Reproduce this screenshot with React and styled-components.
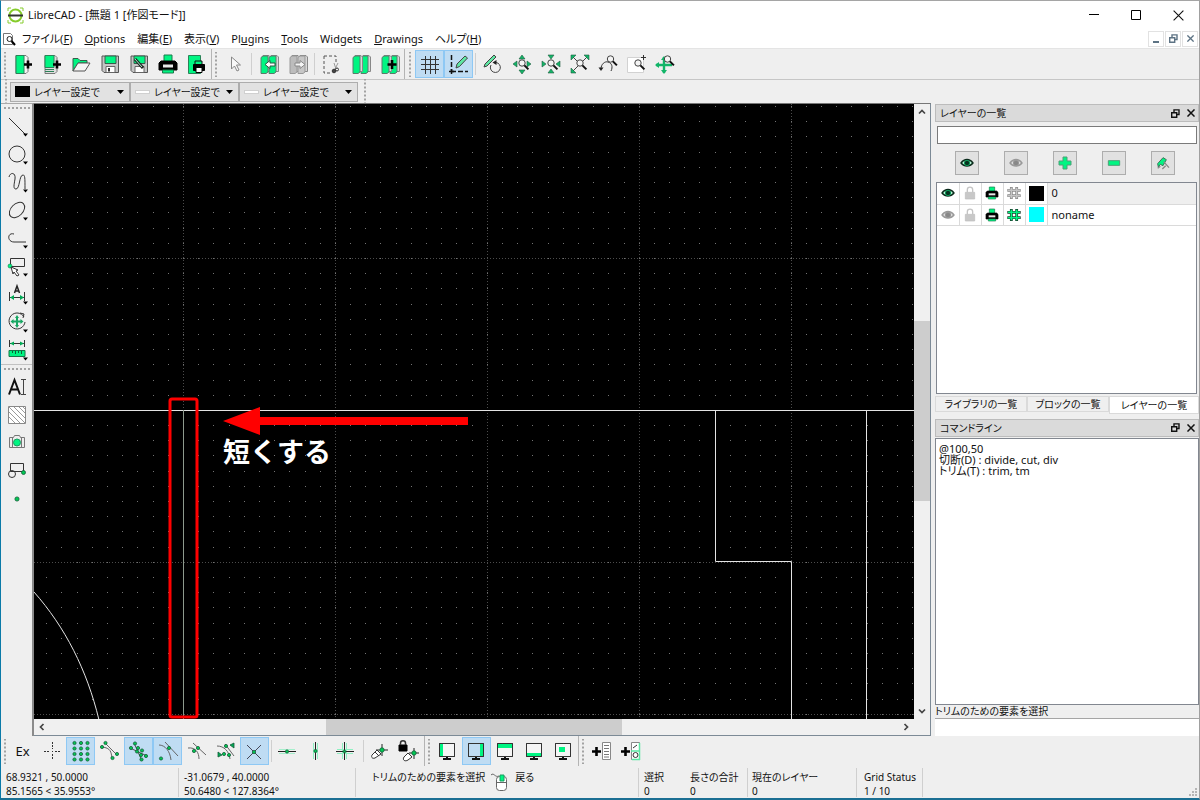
import { useState } from "react";
import styled, { createGlobalStyle, css } from "styled-components";

const GREEN = "#00f582";

const GlobalStyle = createGlobalStyle`
  * {
    box-sizing: border-box;
  }

  body {
    margin: 0;
    background: #efefef;
    color: #111;
    font-family: "Noto Sans", "Noto Sans CJK JP", sans-serif;
    font-size: 11px;
    line-height: 14px;
    font-feature-settings: "palt";
  }

  button, input, select, textarea {
    font: inherit;
    color: inherit;
    font-feature-settings: inherit;
  }
`;

const Window = styled.div`
  display: flex;
  flex-direction: column;
  min-height: 100vh;
  background: #efefef;
  border-top: 1px solid #a5a5a5;
  border-left: 1px solid #0b7aa8;
  border-right: 1px solid #a0a0a0;
  border-bottom: 2px solid #1b6f93;
`;

const TitleBar = styled.header`
  display: flex;
  align-items: center;
  height: 28px;
  padding-left: 6px;
  background: #fff;
`;

const Title = styled.h1`
  flex: 1;
  margin: 0 0 0 4px;
  font-size: 11px;
  font-weight: 400;
`;

const CaptionButton = styled.button`
  display: flex;
  align-items: center;
  justify-content: center;
  width: 42px;
  height: 28px;
  padding: 0;
  border: none;
  background: none;
`;

const MenuBar = styled.nav`
  display: flex;
  align-items: center;
  height: 20px;
  padding: 0 1px;
  background: #fff;
  border-bottom: 1px solid #e4e4e4;
`;

const MenuItem = styled.button`
  padding: 0 6px;
  border: none;
  background: none;
  white-space: nowrap;
`;

const MenuSpace = styled.div`
  flex: 1;
`;

const MdiButton = styled.button`
  display: flex;
  align-items: center;
  justify-content: center;
  width: 16px;
  height: 16px;
  margin-left: 1px;
  padding: 0;
  border: 1px solid #e2e2e2;
  background: #fff;
  color: #5d7384;
`;

const ToolRow = styled.div`
  display: flex;
  align-items: center;
  height: ${(props) => props.$height}px;
  border-bottom: ${(props) => (props.$line ? "1px solid #c6c6c6" : "none")};
`;

const Handle = styled.span`
  flex: none;
  width: ${(props) => props.$width || 8}px;
  height: 25px;
  background: radial-gradient(circle, #a2a2a2 1px, transparent 1px) center / 4px 4px repeat-y;
`;

const SideHandle = styled.span`
  flex: none;
  width: 26px;
  height: 8px;
  background: radial-gradient(circle, #a2a2a2 1px, transparent 1px) center / 4px 4px repeat-x;
`;

const Sep = styled.span`
  flex: none;
  width: 1px;
  height: 22px;
  margin: 0 2px;
  background: #cfcfcf;
`;

const GroupEnd = styled.span`
  flex: none;
  width: 1px;
  align-self: stretch;
  background: #b4b4b4;
`;

const ToolButton = styled.button`
  display: flex;
  flex: none;
  align-items: center;
  justify-content: center;
  width: 29px;
  height: 28px;
  padding: 0;
  border: 1px solid transparent;
  background: none;
  font-size: 13px;
  ${(props) =>
    props.$on &&
    css`
      border-color: #8ec8f4;
      background: #bfdcf3;
    `}
`;

const Combo = styled.label`
  display: flex;
  align-items: center;
  gap: 4px;
  width: ${(props) => props.$width}px;
  height: 20px;
  padding: 0 5px 0 4px;
  border: 1px solid #adadad;
  background: #e2e2e2;
  font-size: 10px;
`;

const PenSwatch = styled.span`
  width: 15px;
  height: ${(props) => (props.$line ? 4 : 11)}px;
  background: ${(props) => (props.$line ? "#fff" : "#000")};
  border: ${(props) => (props.$line ? "1px solid #d0d0d0" : "none")};
`;

const Select = styled.select`
  flex: 1;
  min-width: 0;
  padding: 0;
  border: none;
  appearance: none;
  background: none;
`;

const Main = styled.main`
  display: flex;
  flex: 1;
`;

const SideBar = styled.div`
  display: flex;
  flex-direction: column;
  align-items: center;
  width: 33px;
  border-top: 1px solid #aaa;
  border-right: 2px solid #8b8b8b;
`;

const SideLine = styled.span`
  width: 100%;
  height: 1px;
  background: #c2c2c2;
`;

const Center = styled.section`
  display: flex;
  flex: 1;
  flex-direction: column;
  min-width: 0;
  border-top: 1px solid #777;
  border-bottom: 1px solid #7c8a96;
  border-right: 1px solid #7c8a96;
`;

const ViewRow = styled.div`
  display: flex;
  flex: 1;
`;

const ViewSlot = styled.div`
  display: flex;
  flex: 1;
  min-width: 0;
  overflow: hidden;
  background: #000;
`;

const Drawing = styled.svg`
  flex: 1 1 0;
  min-width: 0;
  height: auto;
`;

const Note = styled.text`
  fill: #fff;
  font-size: 27px;
  font-weight: 700;
  font-feature-settings: normal;
`;

const VScroll = styled.div`
  display: flex;
  flex-direction: column;
  align-items: center;
  width: 16px;
  background: #f0f0f0;
`;

const HScroll = styled.div`
  display: flex;
  align-items: center;
  height: 16px;
  padding-right: 16px;
  background: #f0f0f0;
`;

const ScrollButton = styled.button`
  display: flex;
  align-items: center;
  justify-content: center;
  width: 16px;
  height: 16px;
  padding: 0;
  border: none;
  background: none;
`;

const Gap = styled.span`
  flex: ${(props) => props.$grow};
`;

const Thumb = styled.span`
  flex: ${(props) => props.$grow};
  align-self: stretch;
  background: #cdcdcd;
`;

const Dock = styled.aside`
  display: flex;
  flex-direction: column;
  width: 268px;
  padding: 1px 0 0 4px;
  font-size: 10px;
`;

const DockTitle = styled.header`
  display: flex;
  flex: none;
  align-items: center;
  height: 18px;
  padding: 0 0 0 4px;
  background: #dadada;
  border: 1px solid #bcbcbc;
`;

const DockName = styled.h2`
  flex: 1;
  margin: 0;
  font-size: 10px;
  font-weight: 400;
`;

const DockButton = styled.button`
  display: flex;
  align-items: center;
  justify-content: center;
  width: 15px;
  height: 14px;
  padding: 0;
  border: none;
  background: none;
`;

const Filter = styled.input`
  flex: none;
  height: 18px;
  margin: 4px 2px 7px;
  border: 1px solid #7a7a7a;
  background: #fff;
`;

const LayerActions = styled.div`
  display: flex;
  justify-content: space-around;
  padding: 0 11px 0 7px;
`;

const LayerButton = styled.button`
  display: flex;
  align-items: center;
  justify-content: center;
  width: 24px;
  height: 24px;
  padding: 0;
  border: 1px solid #adadad;
  background: #e1e1e1;
`;

const LayerList = styled.div`
  flex: 215 1 0px;
  margin: 7px 2px 0 1px;
  border: 1px solid #828790;
  background: #fff;
`;

const LayerTable = styled.table`
  width: 100%;
  border-collapse: collapse;
  font-size: 11px;
`;

const LayerCell = styled.td`
  width: 22px;
  height: 21px;
  padding: 0;
  border-right: 1px solid #dadada;
  border-bottom: 1px solid #dadada;
  text-align: center;
  line-height: 0;
`;

const LayerName = styled.th`
  padding: 0 4px;
  border-bottom: 1px solid #dadada;
  background: ${(props) => (props.$current ? "#efefef" : "#fff")};
  font-weight: 400;
  text-align: left;
`;

const Color = styled.span`
  display: inline-block;
  width: 15px;
  height: 15px;
  background: ${(props) => props.$color};
`;

const Tabs = styled.div`
  display: flex;
  flex: none;
  height: 18px;
  margin: 2px 0 5px;
`;

const Tab = styled.button`
  flex: ${(props) => props.$grow};
  height: ${(props) => (props.$on ? 18 : 16)}px;
  padding: 0;
  border: 1px solid #dadada;
  background: ${(props) => (props.$on ? "#fff" : "#efefef")};
  line-height: 12px;
  white-space: nowrap;
`;

const Log = styled.textarea`
  flex: 264 1 0px;
  margin-top: 1px;
  padding: 4px 3px;
  border: 1px solid #828790;
  background: #fff;
  font-size: 11px;
  line-height: 11px;
  resize: none;
`;

const Prompt = styled.label`
  flex: none;
  height: 14px;
  border-bottom: 1px solid #a5a5a5;
  line-height: 12px;
`;

const CommandInput = styled.input`
  flex: none;
  height: 17px;
  padding: 0 3px;
  border: none;
  background: #fff;
`;

const StatusBar = styled.footer`
  display: flex;
  height: 32px;
  padding-left: 5px;
  font-size: 10px;
`;

const StatusCell = styled.div`
  flex: none;
  width: ${(props) => props.$width}px;
  height: 29px;
  margin-top: 2px;
  padding: 2px 0 0 ${(props) => props.$pad || 0}px;
  border-right: ${(props) => (props.$last ? "none" : "1px solid #cfcfcf")};
  white-space: pre;
`;

const MouseHint = styled.div`
  display: flex;
  gap: 5px;
`;

const SizeGrip = styled.svg`
  align-self: flex-end;
  margin: 0 2px 2px auto;
`;

const Svg = ({ size = 24, children }) => (
  <svg width={size} height={size} viewBox="0 0 24 24" fill="none" stroke="#333" aria-hidden="true">
    {children}
  </svg>
);

const Dots = ({ at, r = 1.6 }) =>
  at.map(([x, y]) => (
    <circle key={`${x}-${y}`} cx={x} cy={y} r={r} fill="#00c853" stroke="#155c38" strokeWidth="0.8" />
  ));

const Plus = ({ x, y, s = 4 }) => (
  <path d={`M${x - s} ${y}h${s * 2}M${x} ${y - s}v${s * 2}`} stroke="#000" strokeWidth="2.6" />
);

const Lens = ({ x = 12, y = 11 }) => (
  <>
    <circle cx={x} cy={y} r="3.2" fill="#f4f4f4" stroke="#444" />
    <path d={`M${x + 2.4} ${y + 2.4}l4 4`} stroke="#111" strokeWidth="2" />
  </>
);

// page with its grey back edge showing on the right
const Sheet = ({ x, fill = GREEN, edge = "#5c7a6c" }) => (
  <>
    <path d={`M${x + 2} 3.5h6l1.5 1.5v14.5h-7.5z`} fill="#d8d8d8" stroke="#888" />
    <path d={`M${x} 5.5l2-1.5h5v16l-2 1.5h-5z`} fill={fill} stroke={edge} />
  </>
);

const Printer = () => (
  <>
    <path d="M8 10V3h8v7" fill={GREEN} stroke="#1a7a4c" />
    <path d="M3 11l2-2h14l2 2v7H3z" fill="#000" stroke="#000" />
    <path d="M7 12.5h10v3H7z" fill="#e8e8e8" stroke="none" />
    <path d="M6.5 18h11v3h-11z" fill={GREEN} stroke="#1a7a4c" />
  </>
);

const Monitor = ({ children, thin }) => (
  <>
    <path d="M3.5 4.5h15v13h-15z" fill={thin ? "none" : "#f5f5f5"} />
    {children}
    <path d="M3.5 4.5h15v13h-15z" />
    <path d="M7 20h8M11 18v2" stroke="#111" strokeWidth="2" />
  </>
);

const ICONS = {
  newDoc: (
    <>
      <path d="M5 3.5h10l2 2v14l-2 2H5z" fill="#f4f4f4" stroke="#777" />
      <path d="M5 3.5h8v18H5z" fill={GREEN} stroke="#2b8258" />
      <Plus x={17} y={12.5} />
    </>
  ),
  newTemplate: (
    <>
      <path d="M5 3.5h10l2 2v14l-2 2H5z" fill="#dedede" stroke="#777" />
      <path d="M5 3.5h9v12H5z" fill={GREEN} stroke="#2b8258" />
      <path d="M5 17.5h9M5 19.5h9" stroke="#2b8258" />
      <Plus x={17} y={12.5} />
    </>
  ),
  open: (
    <>
      <path d="M4 19V6.5h5l2 2h7V11H9z" fill={GREEN} stroke="#3a5b4b" />
      <path d="M4 19l5-8h12l-5 8z" fill="#f6f6f6" stroke="#555" />
    </>
  ),
  save: (
    <>
      <path d="M4 4h16.5v16.5H6L4 18.5z" fill="#c5c5c5" stroke="#555" />
      <path d="M7 4h11v7.5H7z" fill={GREEN} stroke="#3a5b4b" />
      <path d="M8 14.5h9v6H8z" fill="#fff" stroke="#666" />
      <path d="M11 16v3.5" strokeWidth="2" />
    </>
  ),
  saveAs: (
    <>
      <path d="M4 4h16.5v16.5H6L4 18.5z" fill="#c5c5c5" stroke="#555" />
      <path d="M7 4h11v7.5H7z" fill={GREEN} stroke="#3a5b4b" />
      <path d="M8 14.5h9v6H8z" fill="#fff" stroke="#666" />
      <path d="M8 7l8 9" stroke="#222" strokeWidth="3" />
      <path d="M8 7l7 8" stroke="#9af3c8" />
    </>
  ),
  print: <Printer />,
  preview: (
    <>
      <path d="M3.5 3.5h12v18h-12z" fill={GREEN} stroke="#2b8258" />
      <path d="M10 12.5V9h7v3.5" fill={GREEN} stroke="#111" />
      <path d="M8.5 12.5h11v6h-11z" fill="#000" stroke="#000" />
      <path d="M11 15.5h6v5h-6z" fill="#fff" stroke="#000" />
    </>
  ),
  pointer: <path d="M8.5 5v12l3-3 2.5 5 2-1-2.5-5h4z" fill="#f8f8f8" stroke="#888" />,
  undo: (
    <>
      <Sheet x={4} />
      <Sheet x={12} />
      <path d="M8 12.5l5-4v2.5h5v3h-5v2.5z" fill="#fff" stroke="#2d5542" />
    </>
  ),
  redo: (
    <>
      <Sheet x={4} fill="#bcbcbc" edge="#999" />
      <Sheet x={12} fill="#c7c7c7" edge="#999" />
      <path d="M19 12.5l-5-4v2.5H9v3h5v2.5z" fill="#f5f5f5" stroke="#888" />
    </>
  ),
  cut: (
    <>
      <path d="M4 4h12v7M4 4v17h8" stroke="#555" strokeDasharray="3 2" />
      <path d="M14 11l2 6M18 11l-3 6" stroke="#999" />
      <circle cx="14" cy="19" r="1.8" fill="#444" />
      <circle cx="17" cy="17.5" r="1.5" />
    </>
  ),
  copy: (
    <>
      <Sheet x={12} />
      <Sheet x={4} />
    </>
  ),
  paste: (
    <>
      <Sheet x={12} />
      <Sheet x={4} />
      <Plus x={14} y={12.5} s={4.5} />
    </>
  ),
  grid: <path d="M3 7.5h18M3 12.5h18M3 17.5h18M7.5 4v18M12.5 4v18M17.5 4v18" />,
  draft: (
    <>
      <path d="M4.5 3v16M4 19.5h17" stroke="#111" strokeWidth="1.5" strokeDasharray="5 2" />
      <path d="M2 19.5h5M4.5 17v5" stroke="#111" strokeWidth="1.5" />
      <path d="M9 16l1-4 8-8 2.5 2-8 8.5z" fill="#5fe8a4" stroke="#444" />
    </>
  ),
  redraw: (
    <>
      <path d="M3 15l1-3 9-9 2 2-9 9z" fill="#5fe8a4" stroke="#444" />
      <path d="M10 13a5 5 0 1 0 5-2.5" stroke="#444" />
      <path d="M15.5 13v-5l-4 2.5z" fill="#222" stroke="none" />
    </>
  ),
  zoomIn: (
    <>
      <path d="M12 3l3 4H9zM12 22l3-4H9zM3 12l4-3v6zM21 12l-4-3v6z" fill="#12b568" stroke="#225c40" strokeWidth="0.6" />
      <Lens />
    </>
  ),
  zoomOut: (
    <>
      <path d="M9 3h6l-3 4zM9 21h6l-3-4zM3 9v6l4-3zM21 9v6l-4-3z" fill="#12b568" stroke="#225c40" strokeWidth="0.6" />
      <Lens />
    </>
  ),
  zoomAuto: (
    <>
      <path d="M5 5l7 7M20 4L4 20" stroke="#444" />
      <path d="M3 3h5L3 8zM21 3v5l-5-5zM3 21v-5l5 5z" fill="#12b568" stroke="#225c40" strokeWidth="0.6" />
      <Lens />
    </>
  ),
  zoomPrev: (
    <>
      <path d="M4 17c0-5 4-8 7-7 4 1 5 5 3 9" />
      <path d="M1.5 15.5h5L4 19z" fill="#222" stroke="none" />
      <Lens x={13.5} y={7} />
    </>
  ),
  zoomWindow: (
    <>
      <path d="M1.5 5.5h16v15h-16z" fill="#fff" stroke="#d2d2d2" />
      <path d="M15 5.5h5M17.5 3v5" />
      <Lens />
    </>
  ),
  zoomPan: (
    <>
      <path d="M9 5v16M1 13h16" stroke="#12b568" strokeWidth="2.4" />
      <path d="M6 8l3-4 3 4zM6 18l3 4 3-4zM4 10l-4 3 4 3z" fill="#12b568" stroke="none" />
      <Lens x={12.5} y={7} />
    </>
  ),
  line: <path d="M4 4l17 17" />,
  circle: <circle cx="12" cy="12" r="8" />,
  spline: <path d="M4 7c1-5 7-5 6 2-1 6-2 10 1 10 4 0 3-14 7-14 2 0 2 3 2 14" />,
  ellipse: <ellipse cx="12" cy="12" rx="9" ry="6" transform="rotate(-45 12 12)" />,
  polyline: <path d="M9 8c-7-2-7 8 0 8h12" />,
  select: (
    <>
      <path d="M5.5 4.5h14v8h-14z" />
      <circle cx="5" cy="12" r="2" fill={GREEN} stroke="#174" strokeWidth="0.6" />
      <path d="M6 13l7 3-2 1 3 4-2 1-3-4-1 2z" fill="#fff" />
    </>
  ),
  dimension: (
    <>
      <path d="M4.5 10v9M19.5 10v9M5 15.5h14" />
      <path d="M9.5 11l2.500-7 2.5 7M10.500 9h3" stroke="#222" strokeWidth="1.5" />
      <path d="M5 15.5l4-2.5v5zM19 15.5l-4-2.5v5z" fill="#0a5" stroke="none" />
    </>
  ),
  modify: (
    <>
      <path d="M19 7a8 8 0 1 0 1 5M15 3l4 1-1 4" />
      <path d="M12 7v9M7.5 11.5h9" stroke="#18a763" strokeWidth="2" />
      <path d="M10 8l2-3 2 3zM10 15l2 3 2-3zM8.5 9l-3 2.5 3 2.5zM15.5 9l3 2.5-3 2.5z" fill="#18a763" stroke="none" />
    </>
  ),
  info: (
    <>
      <path d="M4.5 2v7M19.5 2v7M5 5.5h14" />
      <path d="M5 5.5l4-2v4zM19 5.5l-4-2v4z" fill="#0a5" stroke="none" />
      <path d="M4 12.5h16v6H4z" fill={GREEN} stroke="#167447" />
      <path d="M7.5 13v2M10.5 13v3M13.5 13v2M16.5 13v3" stroke="#0b6137" />
    </>
  ),
  text: (
    <>
      <path d="M4 19.5L9.5 5l5.5 14.5M6 14.5h7.5" stroke="#111" strokeWidth="2" />
      <path d="M16 4.5h5M18.5 4.5v15M16 19.5h5" stroke="#444" />
    </>
  ),
  hatch: (
    <>
      <path d="M3.5 3.5h17v17h-17z" fill="#fff" stroke="#888" />
      <path d="M4 4l16 16M9 4l11 11M14 4l6 6M4 9l11 11M4 14l6 6M18 4l2 2" stroke="#999" />
    </>
  ),
  image: (
    <>
      <path d="M4.5 6.5h4l1-2h5l1 2h4v10h-15zM7.5 7v9M16.5 7v9" fill="#eee" stroke="#777" />
      <circle cx="12" cy="11.5" r="3.5" fill={GREEN} stroke="#1b9c60" />
    </>
  ),
  block: (
    <>
      <path d="M5.5 4.5h13v8h-13z" />
      <circle cx="7" cy="15" r="3.5" />
      <Dots at={[[18.5, 13.5]]} r={2} />
    </>
  ),
  point: <Dots at={[[12, 12]]} r={2.1} />,
  snapFree: <path d="M12.5 3v7M12.5 15v6M4 12.5h6M15 12.5h6M12.5 12v1" strokeDasharray="2 1" />,
  snapGrid: <Dots at={[5.5, 12, 18.5].flatMap((x) => [4, 9.5, 15, 20.5].map((y) => [x, y]))} />,
  snapEnd: (
    <>
      <path d="M4 8c9 1 9 5 10 11M7 4l11 11" stroke="#666" />
      <Dots at={[[4, 8], [7.5, 4], [19, 15], [14.5, 19]]} />
    </>
  ),
  snapEntity: (
    <>
      <path d="M3 9l17 8M7 4l8 18" stroke="#555" />
      <Dots at={[[4, 9], [8, 4.5], [11, 9], [10, 12.5], [15, 11.5], [14, 16], [19, 17], [14.5, 20.5]]} />
    </>
  ),
  snapCenter: (
    <>
      <path d="M3 6c6 0 11 6 12 15M9 3l13 14" stroke="#666" />
      <Dots at={[[13, 9], [5, 19.5]]} />
    </>
  ),
  snapMiddle: (
    <>
      <path d="M3 9c8-1 11 5 11 11M8 4l13 12" stroke="#666" />
      <Dots at={[[9, 12], [13, 9]]} />
    </>
  ),
  snapDist: (
    <>
      <path d="M3 7c7 0 12 5 13 13M11 5l9 12" stroke="#666" />
      <path d="M16 6l4-2v5zM4 13l4 3-4 2z" fill="#0a5" stroke="#155c38" strokeWidth="0.8" />
      <Dots at={[[12, 7], [10, 15], [15, 16]]} />
    </>
  ),
  snapCross: (
    <>
      <path d="M4 6l14 14M18 6L4 20" stroke="#445" />
      <Dots at={[[11, 13]]} />
    </>
  ),
  restrictH: (
    <>
      <path d="M2 10.5h16M2 14.5h16" stroke="#a5efcc" />
      <path d="M1 12.5h18" stroke="#222" />
      <Dots at={[[10, 12.5]]} />
    </>
  ),
  restrictV: (
    <>
      <path d="M7.5 4v16M11.500 4v16" stroke="#8ff0c2" />
      <path d="M9.5 3v18" stroke="#222" />
      <Dots at={[[9.5, 12]]} />
    </>
  ),
  restrictO: (
    <>
      <path d="M7.5 4v16M11.5 4v16M2 10.5h16M2 14.5h16" stroke="#8ff0c2" />
      <path d="M9.5 3v18M1 12.5h18" stroke="#222" />
      <Dots at={[[9.5, 12.5]]} r={1.3} />
    </>
  ),
  relZero: (
    <>
      <path d="M13 5v12M7 11h12" stroke="#222" />
      <Dots at={[[13, 11]]} r={2.2} />
      <path d="M3 16l5-5 4 4-6 4c-3 1-4-1-3-3zM6 13l4 4" fill="#fff" />
    </>
  ),
  lockZero: (
    <>
      <path d="M1 6h8v6H1z" fill="#000" stroke="#000" />
      <path d="M2.5 6V4c0-3 5-3 5 0v2" strokeWidth="1.5" />
      <path d="M16 9v11M11 14h10" stroke="#222" />
      <Dots at={[[16, 14]]} r={2.2} />
      <path d="M6 18l4-4 4 4-4 3c-3 2-6 0-4-3z" fill="#fff" />
    </>
  ),
  dockLeft: <Monitor><path d="M4 5h3v12H4z" fill={GREEN} stroke="none" /></Monitor>,
  dockRight: <Monitor thin><path d="M15 5h3v12h-3z" fill={GREEN} stroke="none" /></Monitor>,
  dockTop: <Monitor><path d="M4 5h14v4H4z" fill={GREEN} stroke="none" /></Monitor>,
  dockBottom: <Monitor><path d="M4 14h14v3H4z" fill={GREEN} stroke="none" /></Monitor>,
  dockFloat: <Monitor><path d="M7 8h6v5H7z" fill={GREEN} stroke="none" /></Monitor>,
  addList: (
    <>
      <Plus x={6.5} y={12.5} s={4.5} />
      <path d="M12.5 3.5h8v17h-8z" fill="#fff" stroke="#888" />
      <path d="M14 6.5h5M14 9.5h5M14 12.5h5M14 15.5h5M14 18h5" stroke="#777" />
    </>
  ),
  addTool: (
    <>
      <Plus x={6.5} y={12.5} s={4.5} />
      <path d="M12.5 3.5h8v17h-8z" fill="#fff" stroke="#888" />
      <path d="M20.5 4v17M12 12h9M13 20.5h8" stroke="#5be8a4" strokeWidth="1.5" />
      <path d="M14 9l4-3" />
      <circle cx="16.5" cy="16" r="2.5" />
    </>
  ),
};

const Eye = ({ off }) => (
  <Svg size={16}>
    <path d="M3 12c5-7 13-7 18 0-5 6-13 6-18 0z" fill={off ? "#ddd" : "#b8f6d8"} stroke={off ? "#999" : "#0a2a1b"} strokeWidth="2" />
    <circle cx="12" cy="12" r="4" fill={off ? "#888" : "#06331f"} stroke={off ? "#999" : "#0b9a58"} strokeWidth="1.5" />
  </Svg>
);

const Lock = () => (
  <Svg size={16}>
    <path d="M5 11h14v10H5z" fill="#c8c8c8" stroke="#bbb" />
    <path d="M8 11V7c0-5 8-5 8 0v4" stroke="#c4c4c4" strokeWidth="2" />
  </Svg>
);

const Hash = ({ off }) => (
  <Svg size={16}>
    <path d="M8 3v18M16 3v18M2 8h20M2 16h20" stroke={off ? "#888" : "#123d28"} strokeWidth="4.2" />
    <path d="M8 4v16M16 4v16M3 8h18M3 16h18" stroke={off ? "#c4c4c4" : GREEN} strokeWidth="2.2" />
  </Svg>
);

const Restore = () => (
  <svg width="9" height="9" viewBox="0 0 9 9" fill="none" stroke="currentColor" strokeWidth="1.4">
    <path d="M.7 3.7h5v4.6h-5zM3 3V.9h5v4.6H6" />
  </svg>
);

const Cross = ({ size = 9 }) => (
  <svg width={size} height={size} viewBox="0 0 9 9" stroke="currentColor" strokeWidth={size > 9 ? 0.9 : 1.7}>
    <path d="M.5.5l8 8M8.5.5l-8 8" />
  </svg>
);

const Arrow = ({ turn }) => (
  <svg width="8" height="8" viewBox="0 0 8 8" fill="none" stroke="#444" strokeWidth="1.7">
    <path d="M1 5.5l3-3 3 3" transform={`rotate(${turn} 4 4)`} />
  </svg>
);

const MENUS = [
  ["ファイル(", "F", ")"],
  ["", "O", "ptions"],
  ["編集(", "E", ")"],
  ["表示(", "V", ")"],
  ["Pl", "u", "gins"],
  ["", "T", "ools"],
  ["Widgets", "", ""],
  ["", "D", "rawings"],
  ["ヘルプ(", "H", ")"],
];

const TOP_TOOLS = [
  "newDoc", "newTemplate", "open", "save", "saveAs", "print", "preview", "end", "handle",
  "pointer", "sep", "undo", "redo", "sep", "cut", "copy", "paste", "end", "wide",
  "grid", "draft", "sep", "redraw", "zoomIn", "zoomOut", "zoomAuto", "zoomPrev", "zoomWindow", "zoomPan",
];

const SNAP_TOOLS = [
  "ex", "snapFree", "snapGrid", "snapEnd", "snapEntity", "snapCenter", "snapMiddle", "snapDist", "snapCross",
  "sep", "restrictH", "restrictV", "restrictO", "sep", "relZero", "lockZero", "end", "handle",
  "dockLeft", "dockRight", "dockTop", "dockBottom", "dockFloat", "end", "handle", "addList", "addTool",
];

const DRAW_TOOLS = ["line", "circle", "spline", "ellipse", "polyline", "select", "dimension", "modify", "info"];
const OTHER_TOOLS = ["text", "hatch", "image", "block", "point"];

const LAYERS = [
  { name: "0", color: "#000", visible: true, construction: false, current: true },
  { name: "noname", color: "#00ffff", visible: false, construction: true, current: false },
];

function Tools({ items }) {
  const [on, setOn] = useState({
    grid: true,
    draft: true,
    snapGrid: true,
    snapEntity: true,
    snapCenter: true,
    snapCross: true,
    dockRight: true,
  });

  return items.map((item, i) => {
    if (item === "sep") return <Sep key={i} />;
    if (item === "end") return <GroupEnd key={i} />;
    if (item === "handle") return <Handle key={i} />;
    if (item === "wide") return <Handle key={i} $width={10} />;
    return (
      <ToolButton key={i} aria-label={item} $on={on[item]} onClick={() => setOn({ ...on, [item]: !on[item] })}>
        {item === "ex" ? "Ex" : <Svg>{ICONS[item]}</Svg>}
      </ToolButton>
    );
  });
}

// minor grid points every tenth of a major cell, snapped to whole pixels
const CELL = 151.9;
const gridDots = () => {
  let d = "";
  for (let i = -9; i < 120; i++) {
    for (let j = -10; j < 80; j++) {
      d += `M${Math.round(149 + (i * CELL) / 10)} ${Math.round(154 + (j * CELL) / 10)}h1v1h-1z`;
    }
  }
  return d;
};
const DOTS = gridDots();
const MAJORS = [0, 1, 2, 3, 4, 5, 6, 7, 8, 9, 10].map((n) => Math.round(n * CELL));

function Canvas() {
  return (
    <Drawing width="100%" role="img" aria-label="drawing">
      <path d={DOTS} fill="#747474" shapeRendering="crispEdges" />
      <g stroke="#4c4c4c" strokeDasharray="1 2" shapeRendering="crispEdges">
        {MAJORS.map((n) => (
          <path key={n} d={`M${149.5 + n} 0V2000M0 ${154.5 + n}H3000`} />
        ))}
      </g>
      <g fill="none" stroke="#e4e4e4">
        <path d="M0 306.5H3000M681.5 306V457.5H757.5V2000M832.5 306V2000" />
        <path d="M149.5 306V2000" stroke="#8d9a8d" />
        <path d="M0 488C31 523 53 566 65 616" />
      </g>
      <rect x="136" y="295" width="27" height="318" rx="2" fill="none" stroke="#f00" strokeWidth="3" />
      <path d="M189 317l37-14v10h208v8H226v10z" fill="#f00" />
      <Note x="189" y="358">短くする</Note>
    </Drawing>
  );
}

function SideTool({ name, arrow }) {
  return (
    <ToolButton aria-label={name}>
      <Svg>
        {ICONS[name]}
        {arrow && <path d="M18 19.5h5l-2.5 3z" fill="#000" stroke="none" />}
      </Svg>
    </ToolButton>
  );
}

function PenCombo({ width, line, label }) {
  return (
    <Combo $width={width}>
      <PenSwatch $line={line} />
      <Select aria-label={label}>
        <option>レイヤー設定で</option>
      </Select>
      <svg width="7" height="4" viewBox="0 0 7 4">
        <path d="M0 0h7L3.5 4z" />
      </svg>
    </Combo>
  );
}

function DockHeader({ title }) {
  return (
    <DockTitle>
      <DockName>{title}</DockName>
      <DockButton aria-label="float"><Restore /></DockButton>
      <DockButton aria-label="close"><Cross size={8} /></DockButton>
    </DockTitle>
  );
}

function LayerPanel() {
  return (
    <>
      <DockHeader title="レイヤーの一覧" />
      <Filter aria-label="filter" />
      <LayerActions>
        <LayerButton aria-label="show all"><Eye /></LayerButton>
        <LayerButton aria-label="hide all"><Eye off /></LayerButton>
        <LayerButton aria-label="add">
          <Svg size={16}>
            <path d="M9 3h6v6h6v6h-6v6H9v-6H3V9h6z" fill={GREEN} stroke="#4f9f78" strokeWidth="1.5" />
          </Svg>
        </LayerButton>
        <LayerButton aria-label="remove">
          <Svg size={16}>
            <path d="M3.5 8.5h17v7h-17z" fill={GREEN} stroke="#4f9f78" strokeWidth="1.5" />
          </Svg>
        </LayerButton>
        <LayerButton aria-label="edit">
          <Svg size={16}>
            <path d="M4 13l8-9 5 3-5 9-4-2-3 4z" fill={GREEN} stroke="#3b7558" strokeWidth="1.5" />
            <path d="M13 10l8 9M4 20l4-3M16 16l-5 5" stroke="#888" strokeWidth="2" />
          </Svg>
        </LayerButton>
      </LayerActions>
      <LayerList>
        <LayerTable>
          <tbody>
            {LAYERS.map((layer) => (
              <tr key={layer.name}>
                <LayerCell><Eye off={!layer.visible} /></LayerCell>
                <LayerCell><Lock /></LayerCell>
                <LayerCell><Svg size={16}><Printer /></Svg></LayerCell>
                <LayerCell><Hash off={!layer.construction} /></LayerCell>
                <LayerCell><Color $color={layer.color} /></LayerCell>
                <LayerName scope="row" $current={layer.current}>{layer.name}</LayerName>
              </tr>
            ))}
          </tbody>
        </LayerTable>
      </LayerList>
      <Tabs>
        <Tab $grow={92}>ライブラリの一覧</Tab>
        <Tab $grow={82}>ブロックの一覧</Tab>
        <Tab $grow={90} $on>レイヤーの一覧</Tab>
      </Tabs>
    </>
  );
}

function App() {
  return (
    <Window>
      <GlobalStyle />
      <TitleBar>
        <svg width="17" height="17" viewBox="0 0 17 17" fill="none">
          <circle cx="8.5" cy="8.5" r="6" stroke="#86cc2c" strokeWidth="2" />
          <path d="M1 4V1h3M13 1h3v3M1 13v3h3M13 16h3v-3" stroke="#86cc2c" />
          <path d="M1 8.5h15" stroke="#333" strokeWidth="2" />
        </svg>
        <Title>LibreCAD - [無題 1 [作図モード]]</Title>
        <CaptionButton aria-label="minimize">
          <svg width="10" height="2" viewBox="0 0 10 2"><path d="M0 0h10v1H0z" /></svg>
        </CaptionButton>
        <CaptionButton aria-label="maximize">
          <svg width="10" height="10" viewBox="0 0 10 10" fill="none" stroke="#000"><path d="M.5.5h9v9h-9z" /></svg>
        </CaptionButton>
        <CaptionButton aria-label="close"><Cross size={11} /></CaptionButton>
      </TitleBar>
      <MenuBar>
        <svg width="14" height="14" viewBox="0 0 14 14" fill="none" stroke="#777">
          <path d="M1.5 1.5h7l2 2v9h-9z" fill="#fff" />
          <circle cx="7.5" cy="7" r="2.5" stroke="#222" />
          <path d="M9.5 9l3.5 4" stroke="#000" strokeWidth="2" />
        </svg>
        {MENUS.map(([before, key, after]) => (
          <MenuItem key={before + key}>
            {before}
            <u>{key}</u>
            {after}
          </MenuItem>
        ))}
        <MenuSpace />
        <MdiButton aria-label="minimize document">
          <svg width="6" height="8" viewBox="0 0 6 8"><path d="M0 6h6v2H0z" fill="#5d7384" /></svg>
        </MdiButton>
        <MdiButton aria-label="restore document"><Restore /></MdiButton>
        <MdiButton aria-label="close document"><Cross size={7} /></MdiButton>
      </MenuBar>
      <ToolRow $height={31} $line>
        <Handle $width={7} />
        <Tools items={TOP_TOOLS} />
      </ToolRow>
      <ToolRow $height={23}>
        <Handle $width={9} />
        <PenCombo width={120} label="color" />
        <PenCombo width={109} line label="width" />
        <PenCombo width={119} line label="line type" />
        <Handle $width={14} />
      </ToolRow>
      <Main>
        <SideBar>
          <SideHandle />
          {DRAW_TOOLS.map((name) => (
            <SideTool key={name} name={name} arrow />
          ))}
          <SideLine />
          <SideHandle />
          {OTHER_TOOLS.map((name) => (
            <SideTool key={name} name={name} />
          ))}
        </SideBar>
        <Center>
          <ViewRow>
            <ViewSlot>
              <Canvas />
            </ViewSlot>
            <VScroll>
              <ScrollButton aria-label="up"><Arrow turn={0} /></ScrollButton>
              <Gap $grow={201} />
              <Thumb $grow={180} />
              <Gap $grow={202} />
              <ScrollButton aria-label="down"><Arrow turn={180} /></ScrollButton>
            </VScroll>
          </ViewRow>
          <HScroll>
            <ScrollButton aria-label="left"><Arrow turn={270} /></ScrollButton>
            <Gap $grow={276} />
            <Thumb $grow={296} />
            <Gap $grow={276} />
            <ScrollButton aria-label="right"><Arrow turn={90} /></ScrollButton>
          </HScroll>
        </Center>
        <Dock>
          <LayerPanel />
          <DockHeader title="コマンドライン" />
          <Log
            aria-label="command log"
            readOnly
            value={"@100,50\n切断(D) : divide, cut, div\nトリム(T) : trim, tm"}
          />
          <Prompt htmlFor="command">トリムのための要素を選択</Prompt>
          <CommandInput id="command" />
        </Dock>
      </Main>
      <ToolRow $height={30}>
        <Handle $width={7} />
        <Tools items={SNAP_TOOLS} />
      </ToolRow>
      <StatusBar>
        <StatusCell $width={173}>{"68.9321 , 50.0000\n85.1565 < 35.9553°"}</StatusCell>
        <StatusCell $width={177} $pad={5}>{"-31.0679 , 40.0000\n50.6480 < 127.8364°"}</StatusCell>
        <StatusCell $width={283} $pad={16}>
          <MouseHint>
            トリムのための要素を選択
            <svg width="20" height="22" viewBox="0 0 20 22" fill="none" stroke="#666">
              <path d="M1 5c3-3 4 3 8 1" />
              <rect x="6.5" y="6.5" width="10" height="14" rx="3" fill="#fff" />
              <path d="M10 5h4v6h-4z" fill={GREEN} stroke="#1b9c60" />
              <path d="M7 12.5h9" />
            </svg>
            戻る
          </MouseHint>
        </StatusCell>
        <StatusCell $width={46} $pad={5} $last>{"選択\n0"}</StatusCell>
        <StatusCell $width={63} $pad={5}>{"長さの合計\n0"}</StatusCell>
        <StatusCell $width={109} $pad={4}>{"現在のレイヤー\n0"}</StatusCell>
        <StatusCell $width={66} $pad={7}>{"Grid Status\n1 / 10"}</StatusCell>
        <SizeGrip width="8" height="8" viewBox="0 0 8 8" fill="#b5b5b5">
          <path d="M6 0h2v2H6zM3 3h2v2H3zM6 3h2v2H6zM0 6h2v2H0zM3 6h2v2H3zM6 6h2v2H6z" />
        </SizeGrip>
      </StatusBar>
    </Window>
  );
}

export default App;
